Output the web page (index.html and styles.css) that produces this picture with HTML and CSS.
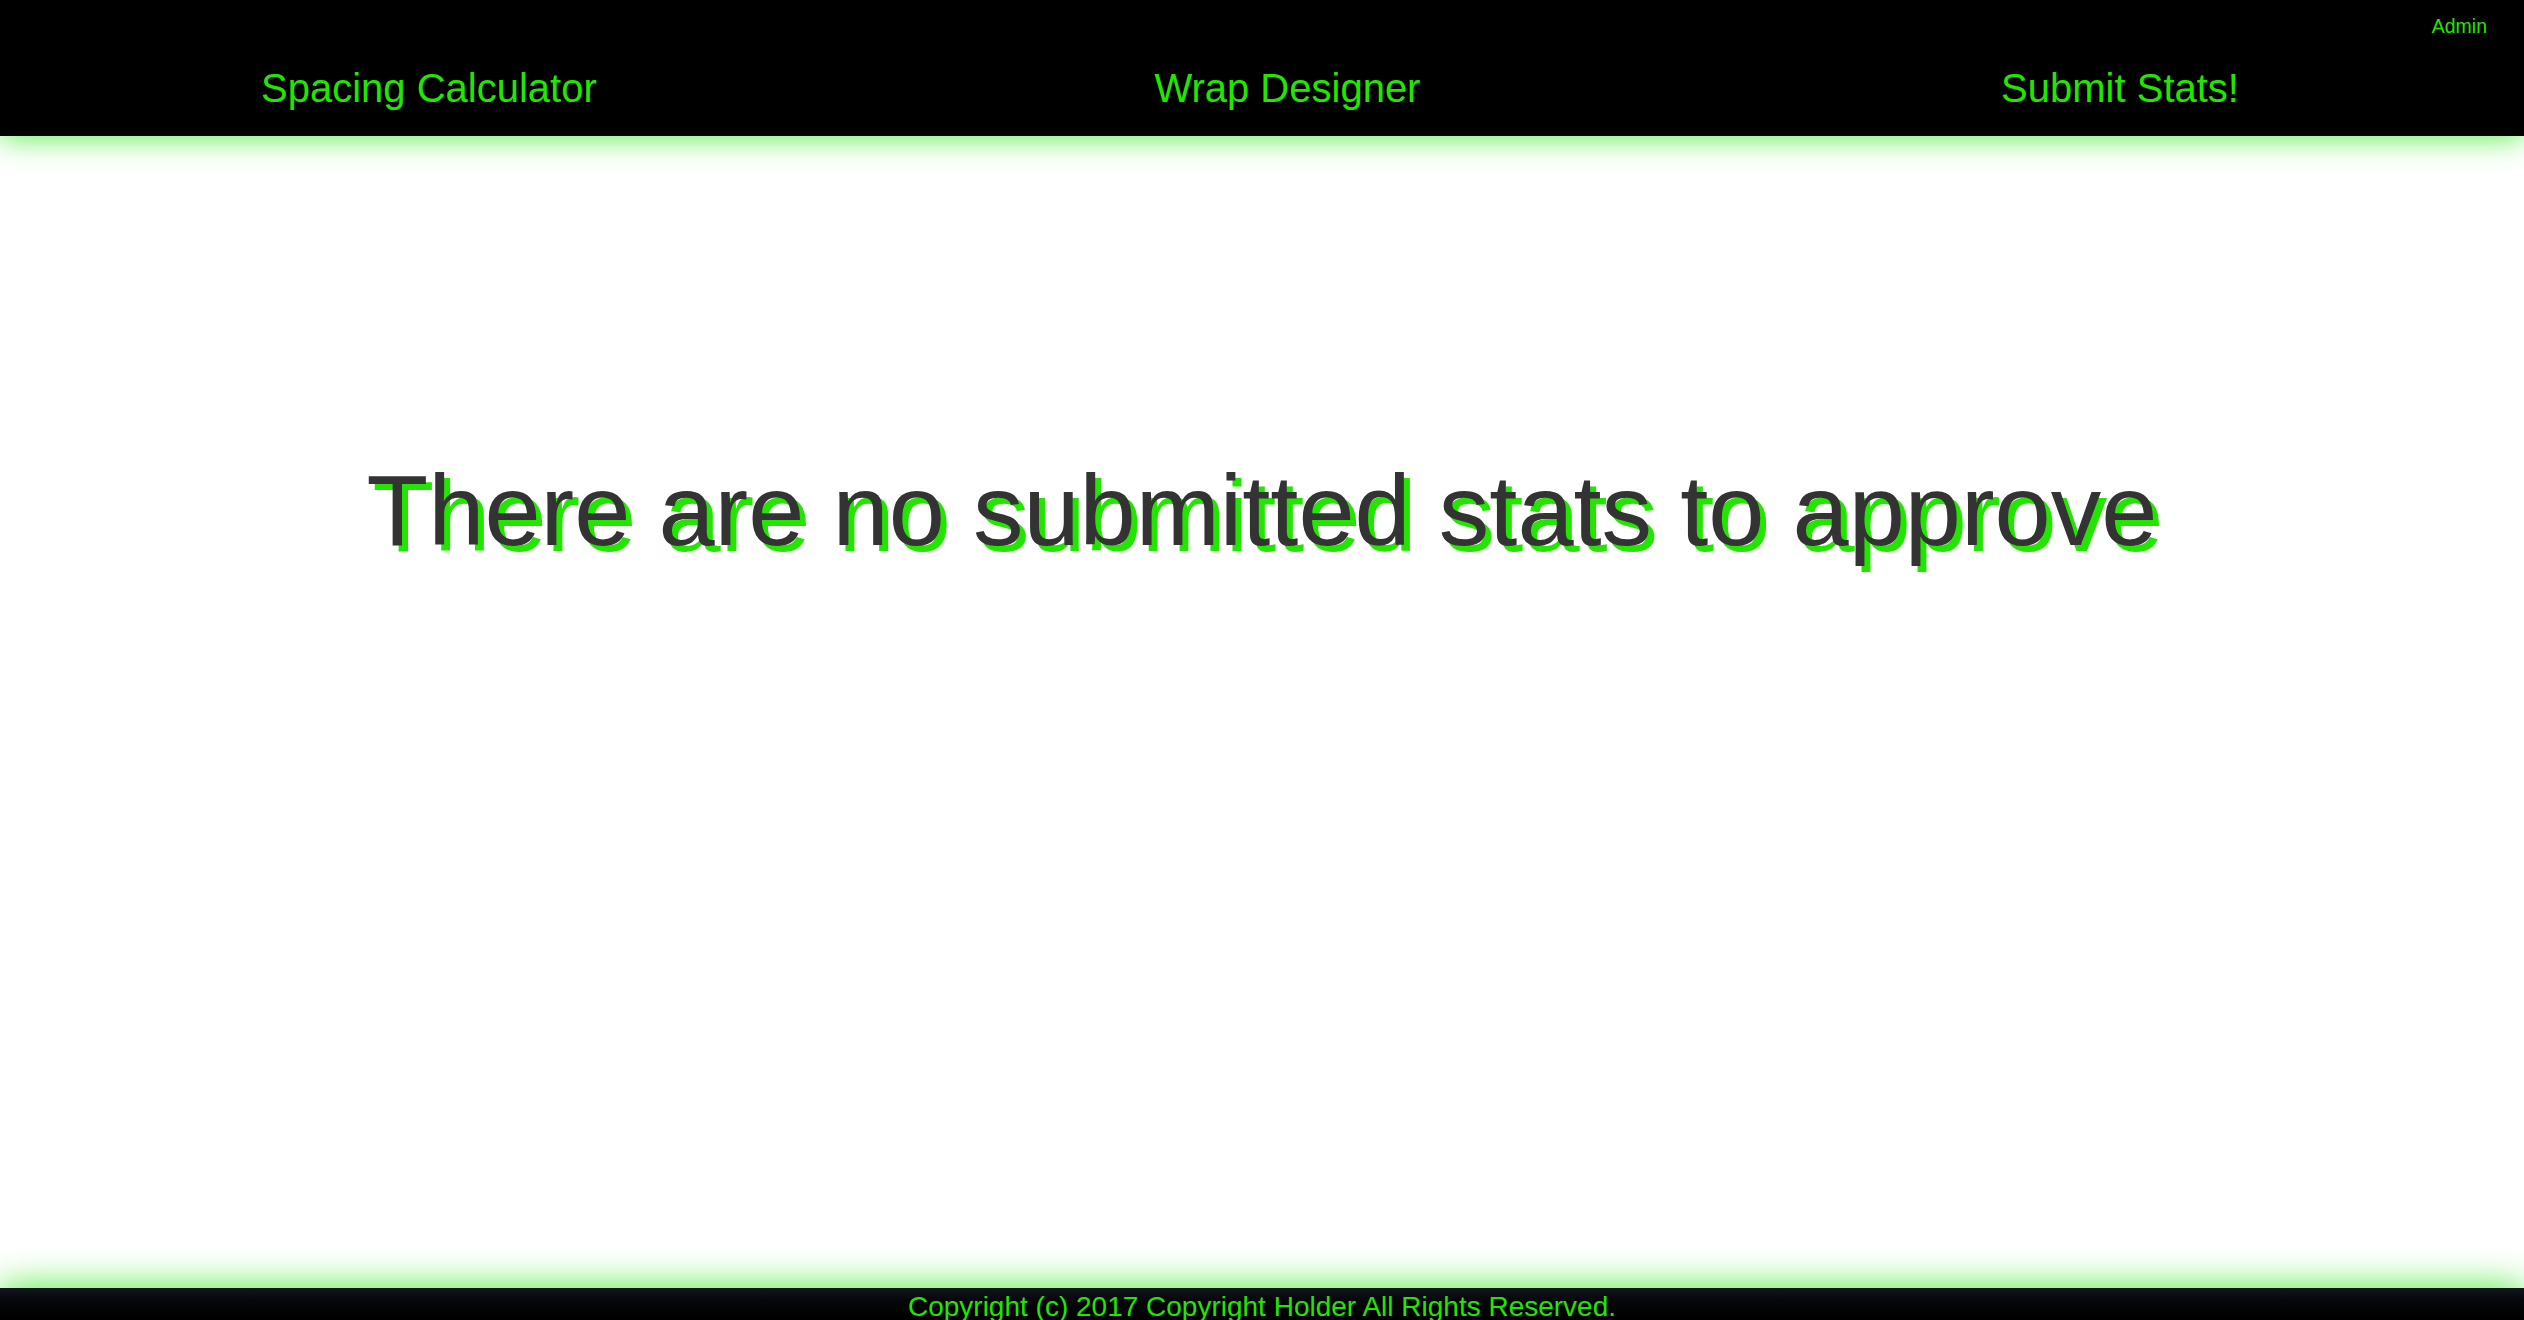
FILE: index.html
```html
<!DOCTYPE html>
<html lang="en">
<head>
<meta charset="utf-8">
<title>Approve Stats</title>
<link rel="stylesheet" href="styles.css">
</head>
<body>
<header class="site-header">
  <div class="admin-row"><a class="admin-link" href="#">Admin</a></div>
  <nav class="main-nav">
    <a class="nav-link" href="#">Spacing Calculator</a>
    <a class="nav-link nav-link-mid" href="#">Wrap Designer</a>
    <a class="nav-link" href="#">Submit Stats!</a>
  </nav>
</header>
<main class="content">
  <h1 class="empty-title">There are no submitted stats to approve</h1>
</main>
<footer class="site-footer">
  <p class="copyright">Copyright (c) 2017 Copyright Holder All Rights Reserved.</p>
</footer>
</body>
</html>
```
FILE: styles.css
```css
html, body {
  margin: 0;
  padding: 0;
}
body {
  height: 1320px;
  overflow: hidden;
  display: flex;
  flex-direction: column;
  background: #ffffff;
  font-family: "Liberation Sans", Arial, Helvetica, sans-serif;
}
a {
  text-decoration: none;
}
.site-header {
  position: relative;
  z-index: 2;
  box-sizing: border-box;
  height: 136px;
  padding-top: 15px;
  background: #000000;
  box-shadow: 0 2px 28px rgba(40, 230, 20, 0.75);
  flex: none;
}
.admin-row {
  display: flex;
  justify-content: flex-end;
  padding-right: 37px;
}
.admin-link {
  color: #23e600;
  font-size: 19.5px;
  line-height: 23px;
}
.main-nav {
  display: flex;
  justify-content: space-between;
  margin-top: 27px;
  padding: 0 285px 0 261px;
}
.nav-link {
  color: #23e600;
  font-size: 40px;
  line-height: 46px;
}
.nav-link-mid {
  margin-right: 23px;
}
.content {
  flex: 1;
  padding-top: 316px;
}
.empty-title {
  margin: 0;
  text-align: center;
  font-size: 101px;
  font-weight: normal;
  line-height: 116px;
  color: #333333;
  text-shadow: 6px 6px 0 #23e600;
}
.site-footer {
  position: relative;
  z-index: 2;
  flex: none;
  box-sizing: border-box;
  height: 32px;
  padding-top: 3px;
  overflow: hidden;
  background: linear-gradient(#12161e 0, #05070a 12px, #000000 100%);
  box-shadow: 0 0 36px rgba(40, 230, 20, 0.9);
}
.copyright {
  margin: 0;
  text-align: center;
  color: #23e600;
  font-size: 28px;
  line-height: 32px;
}
```
